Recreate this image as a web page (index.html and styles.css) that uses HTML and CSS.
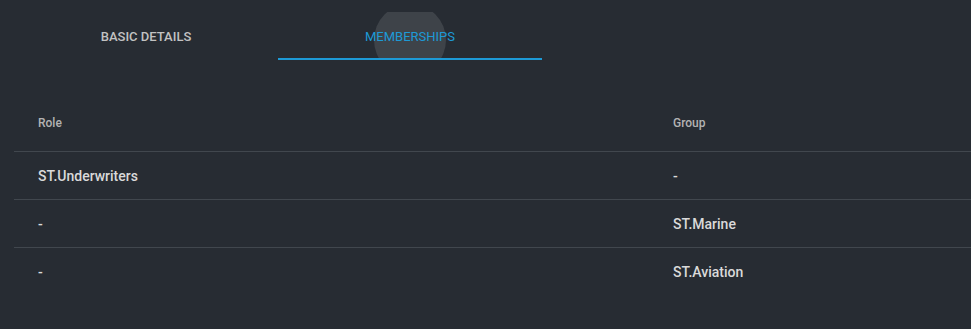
FILE: index.html
```html
<!DOCTYPE html>
<html lang="en">
<head>
    <meta charset="UTF-8">
    <meta name="viewport" content="width=device-width, initial-scale=1.0">
    <title>User Memberships</title>
    <link rel="stylesheet" href="styles.css">
</head>
<body>

    <div class="panel">
        <div class="tabBar">
            <div class="tab">Basic Details</div>
            <div class="tab active">
                <span class="ripple"></span>
                <span class="tabLabel">Memberships</span>
            </div>
        </div>

        <table class="membershipTable">
            <thead>
                <tr>
                    <th class="colRole">Role</th>
                    <th>Group</th>
                </tr>
            </thead>
            <tbody>
                <tr>
                    <td>ST.Underwriters</td>
                    <td>-</td>
                </tr>
                <tr>
                    <td>-</td>
                    <td>ST.Marine</td>
                </tr>
                <tr>
                    <td>-</td>
                    <td>ST.Aviation</td>
                </tr>
            </tbody>
        </table>
    </div>

</body>
</html>
```

FILE: styles.css
```css
body {
    font-family: Roboto, 'Liberation Sans', sans-serif;
    margin: 0;
    padding: 0;
    background-color: #272c33;
    height: 100vh;
    overflow: hidden;
}

.panel {
    padding: 12px 0 0 14px;
}

.tabBar {
    display: flex;
    height: 48px;
}

.tab {
    position: relative;
    width: 264px;
    display: flex;
    justify-content: center;
    align-items: center;
    font-size: 13px;
    font-weight: 500;
    text-transform: uppercase;
    color: #c2c2c2;
    overflow: hidden;
    box-sizing: border-box;
    cursor: pointer;
}

.tab.active {
    color: #1d9ad6;
    font-weight: 400;
    border-bottom: 2px solid #1d9ad6;
    padding-top: 2px;
}

.tabLabel {
    position: relative;
}

.ripple {
    position: absolute;
    left: 50%;
    top: 28px;
    width: 72px;
    height: 72px;
    margin: -36px 0 0 -36px;
    border-radius: 50%;
    background-color: rgba(255, 255, 255, 0.11);
}

.membershipTable {
    margin-top: 35px;
    width: 980px;
    border-collapse: collapse;
}

.membershipTable th,
.membershipTable td {
    text-align: left;
    padding: 0 24px;
}

.membershipTable th {
    height: 56px;
    font-size: 12px;
    font-weight: 500;
    color: #b3b3b3;
    border-bottom: 1px solid #41474e;
}

.colRole {
    width: 587px;
}

.membershipTable td {
    height: 47px;
    font-size: 14px;
    font-weight: 500;
    color: #dadada;
    border-bottom: 1px solid #41474e;
}

.membershipTable tr:last-child td {
    border-bottom: none;
}
```
